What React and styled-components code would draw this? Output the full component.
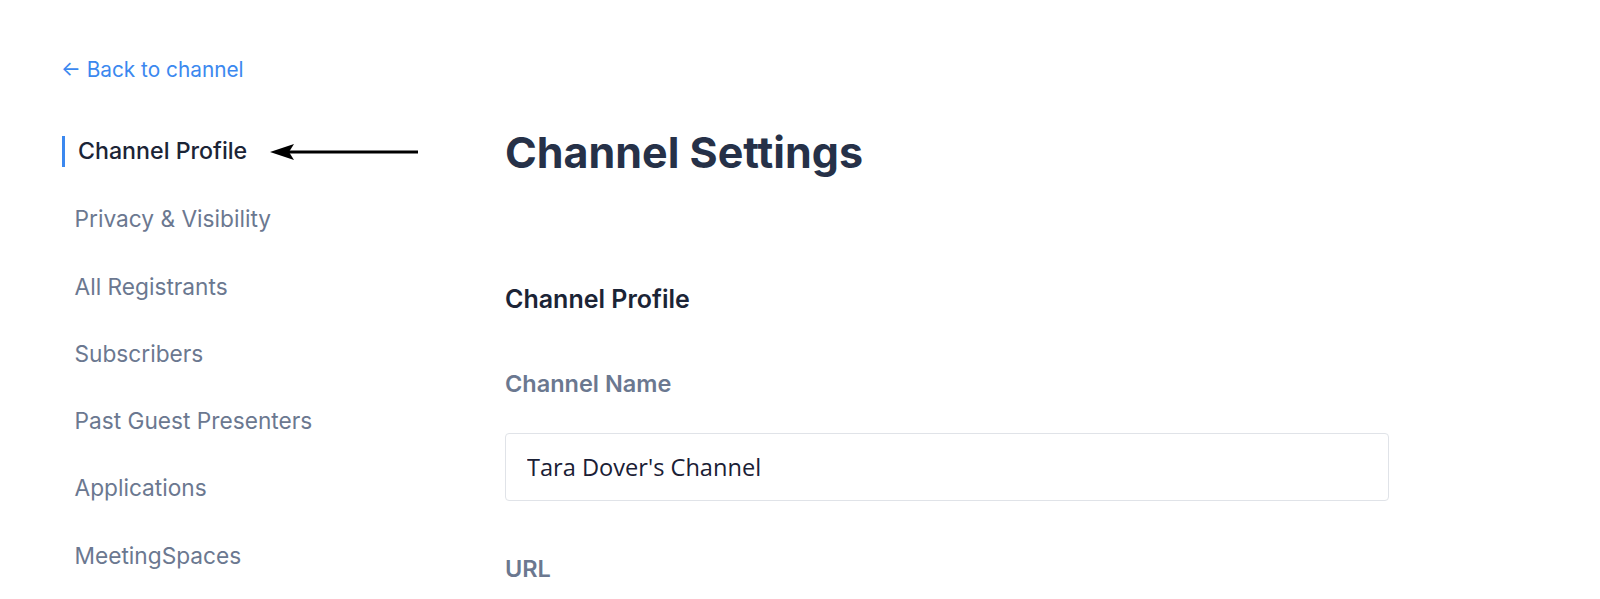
import React from "react";
import styled, { createGlobalStyle } from "styled-components";

const GlobalStyle = createGlobalStyle`
  body {
    margin: 0;
    background: #ffffff;
    font-family: Inter, "Noto Sans", sans-serif;
  }
`;

const Page = styled.div`
  display: grid;
  grid-template-columns: 444px 1fr;
  padding-left: 61px;
  height: 599px;
  overflow: hidden;
`;

const Sidebar = styled.aside`
  display: flex;
  flex-direction: column;
  padding-top: 57px;
`;

const BackLink = styled.a`
  font-size: 20.8px;
  line-height: 25px;
  color: #3b88ef;
  text-decoration: none;
  cursor: pointer;
`;

const NavList = styled.ul`
  list-style: none;
  margin: 54px 0 0;
  padding: 0;
  display: flex;
  flex-direction: column;
  gap: 36.3px;
`;

const NavItem = styled.li`
  position: relative;
  height: 31px;
  line-height: 31px;
  font-size: ${(p) => (p.$active ? "23.2px" : "22.7px")};
  font-weight: ${(p) => (p.$active ? 500 : 400)};
  color: ${(p) => (p.$active ? "#1b2436" : "#6b7890")};
  padding-left: ${(p) => (p.$active ? "13px" : "13.5px")};
  margin-left: ${(p) => (p.$active ? "1px" : "0")};
  border-left: ${(p) => (p.$active ? "3px solid #3b88ef" : "none")};
  cursor: pointer;
`;

const Pointer = styled.svg`
  position: absolute;
  left: 205px;
  top: 5.5px;
  width: 148px;
  height: 20px;
`;

const Main = styled.main`
  display: flex;
  flex-direction: column;
  padding-top: 126px;
`;

const Title = styled.h1`
  margin: 0;
  font-size: 43px;
  line-height: 52px;
  font-weight: 700;
  color: #263148;
`;

const SectionTitle = styled.h2`
  margin: 105px 0 0;
  font-size: 25px;
  line-height: 32px;
  font-weight: 600;
  color: #1b2436;
`;

const Label = styled.label`
  margin-top: ${(p) => p.$gap}px;
  font-size: 23.5px;
  line-height: 32px;
  font-weight: 600;
  color: #6b7890;
`;

const TextInput = styled.input`
  margin-top: 33px;
  box-sizing: border-box;
  width: 884px;
  height: 68.4px;
  padding: 0 21px;
  border: 1.5px solid #e0e3e8;
  border-radius: 4px;
  font-family: "Open Sans", sans-serif;
  font-size: 23.6px;
  color: #1a2035;
  outline: none;
`;

const navItems = [
  "Channel Profile",
  "Privacy & Visibility",
  "All Registrants",
  "Subscribers",
  "Past Guest Presenters",
  "Applications",
  "MeetingSpaces",
];

export default function App() {
  return (
    <>
      <GlobalStyle />
      <Page>
        <Sidebar>
          <BackLink>← Back to channel</BackLink>
          <NavList>
            {navItems.map((item, i) => (
              <NavItem key={item} $active={i === 0}>
                {item}
                {i === 0 && (
                  <Pointer viewBox="0 0 148 20">
                    <path d="M18 10 H148" stroke="#000" strokeWidth="3" />
                    <path d="M0 10 L24 2 L19 10 L24 18 Z" fill="#000" />
                  </Pointer>
                )}
              </NavItem>
            ))}
          </NavList>
        </Sidebar>
        <Main>
          <Title>Channel Settings</Title>
          <SectionTitle>Channel Profile</SectionTitle>
          <Label $gap={52.7}>Channel Name</Label>
          <TextInput defaultValue="Tara Dover's Channel" />
          <Label $gap={52.4}>URL</Label>
        </Main>
      </Page>
    </>
  );
}
